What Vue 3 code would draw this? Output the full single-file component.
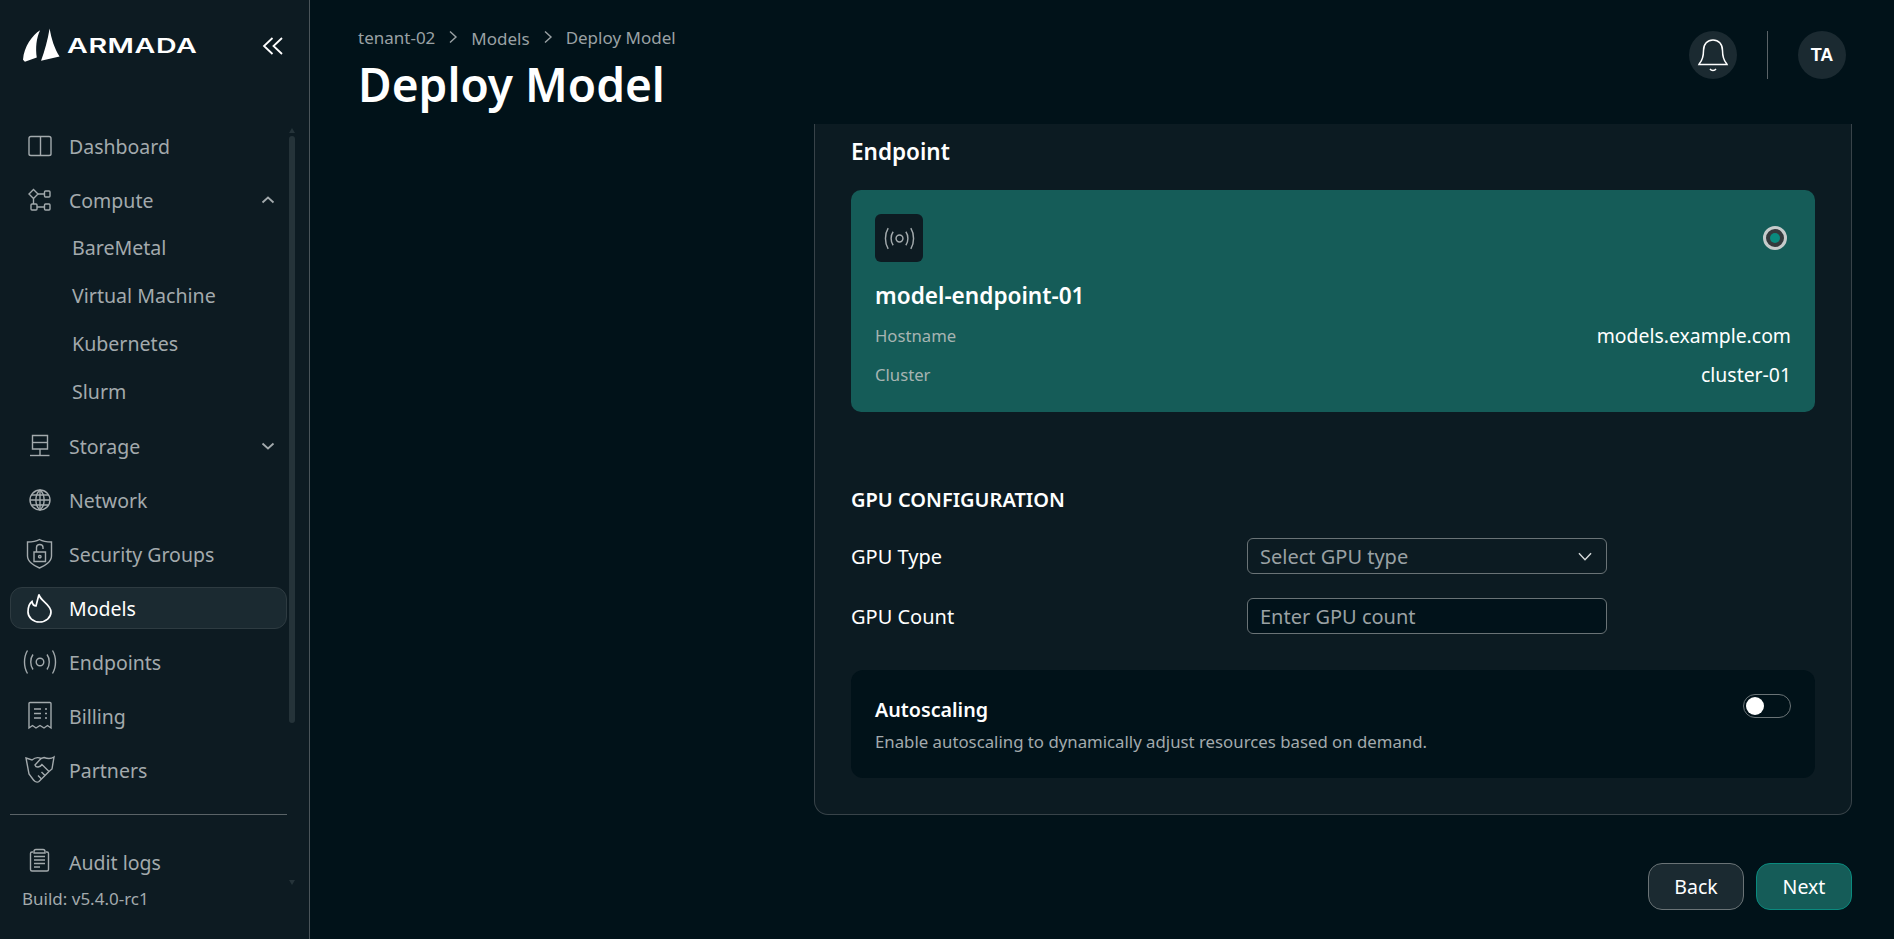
<template>
  <div class="layout">
    <aside class="sidebar">
      <div class="brand">
        <svg class="logo-mark" viewBox="0 0 40 36">
          <path d="M18 2C10 7 1 19 0 33L2 35L14.5 30.5C13 21 14 10 18 2Z" />
          <path d="M28 0C26 12 23 23 19 34L38.5 29.5C33 21 30 11 28 0Z" />
        </svg>
        <span class="logo-text">ARMADA</span>
        <svg class="collapse" viewBox="0 0 22 20">
          <path d="M10.5 2L2 10L10.5 18M20 2L11.5 10L20 18" />
        </svg>
      </div>

      <div class="side-body">
        <div class="side-col">
          <nav class="nav">
            <template v-for="item in navItems" :key="item.label">
              <div class="nav-item" :class="{ active: item.active }">
                <svg class="nav-icon" viewBox="0 0 32 32">
                  <path v-for="d in item.icon" :key="d" :d="d" />
                </svg>
                <span class="nav-label">{{ item.label }}</span>
                <svg v-if="item.chevron" class="nav-chev" viewBox="0 0 14 10">
                  <path :d="item.chevron === 'up' ? 'M1.5 7.5L7 2.5L12.5 7.5' : 'M1.5 2.5L7 7.5L12.5 2.5'" />
                </svg>
              </div>
              <div v-if="item.children" class="sub-list">
                <div v-for="child in item.children" :key="child" class="sub-item">{{ child }}</div>
              </div>
            </template>
          </nav>
          <div class="side-divider"></div>
          <div class="nav-item audit">
            <svg class="nav-icon" viewBox="0 0 32 32">
              <path v-for="d in auditIcon" :key="d" :d="d" />
            </svg>
            <span class="nav-label">Audit logs</span>
          </div>
          <div class="build">Build: v5.4.0-rc1</div>
        </div>
        <div class="scrollbar">
          <span class="arrow up"></span>
          <span class="thumb"></span>
          <span class="arrow down"></span>
        </div>
      </div>
    </aside>

    <main class="main">
      <header class="topbar">
        <div>
          <div class="crumbs">
            <span>tenant-02</span>
            <svg class="crumb-sep" viewBox="0 0 10 14"><path d="M2 1.5L8 7L2 12.5" /></svg>
            <span class="crumb-low">Models</span>
            <svg class="crumb-sep" viewBox="0 0 10 14"><path d="M2 1.5L8 7L2 12.5" /></svg>
            <span>Deploy Model</span>
          </div>
          <h1 class="title">Deploy Model</h1>
        </div>
        <div class="top-actions">
          <div class="round-btn">
            <svg class="bell" viewBox="0 0 48 48">
              <path d="M10.5 32.5C13.5 29 14.5 25 14.5 19.5C14.5 13 18.5 9 24 9C29.5 9 33.5 13 33.5 19.5C33.5 25 34.5 29 37.5 32.5L38 33.5H10L10.5 32.5Z" />
              <path d="M21 38C22.5 40 25.5 40 27 38" />
            </svg>
          </div>
          <span class="top-divider"></span>
          <div class="round-btn initials">TA</div>
        </div>
      </header>

      <section class="content">
        <div class="card">
          <h2 class="card-title">Endpoint</h2>
          <div class="endpoint">
            <div class="endpoint-head">
              <div class="endpoint-icon">
                <svg viewBox="0 0 32 32">
                  <path v-for="d in endpointIcon" :key="d" :d="d" />
                </svg>
              </div>
              <span class="radio"><span class="radio-dot"></span></span>
            </div>
            <div class="endpoint-name">model-endpoint-01</div>
            <div class="endpoint-row first">
              <span class="key">Hostname</span>
              <span class="val">models.example.com</span>
            </div>
            <div class="endpoint-row">
              <span class="key">Cluster</span>
              <span class="val">cluster-01</span>
            </div>
          </div>

          <h3 class="section-title">GPU CONFIGURATION</h3>
          <div class="form-row first">
            <label class="form-label">GPU Type</label>
            <div class="select">
              <span>Select GPU type</span>
              <svg viewBox="0 0 14 10"><path d="M1.5 2L7 8L12.5 2" /></svg>
            </div>
          </div>
          <div class="form-row">
            <label class="form-label">GPU Count</label>
            <input class="input" placeholder="Enter GPU count" />
          </div>

          <div class="autoscale">
            <div>
              <div class="auto-title">Autoscaling</div>
              <div class="auto-desc">Enable autoscaling to dynamically adjust resources based on demand.</div>
            </div>
            <span class="toggle"><span class="knob"></span></span>
          </div>
        </div>
      </section>

      <footer class="footer">
        <button class="btn back">Back</button>
        <button class="btn next">Next</button>
      </footer>
    </main>
  </div>
</template>

<script setup>
const endpointIcon = [
  'M16 12.2A3.8 3.8 0 1 1 16 19.8A3.8 3.8 0 1 1 16 12.2Z',
  'M9 8.5C6 12.5 6 19.5 9 23.5',
  'M23 8.5C26 12.5 26 19.5 23 23.5',
  'M3.5 4.5C-0.5 11 -0.5 21 3.5 27.5',
  'M28.5 4.5C32.5 11 32.5 21 28.5 27.5'
]

const auditIcon = [
  'M9 6H8C7 6 6.5 6.5 6.5 7.5V23.5C6.5 24.5 7 25 8 25H23C24 25 24.5 24.5 24.5 23.5V7.5C24.5 6.5 24 6 23 6H22',
  'M10 5.5C10 4 10.5 3.5 12 3.5H19C20.5 3.5 21 4 21 5.5V7H10V5.5Z',
  'M10 10.5H21M10 14H21M10 17.5H21M10 21H16'
]

const navItems = [
  {
    label: 'Dashboard',
    icon: ['M7 6.5H25C26 6.5 27 7.5 27 8.5V24C27 25 26 25.5 25 25.5H7C6 25.5 5 25 5 24V8.5C5 7.5 6 6.5 7 6.5Z', 'M16.5 6.5V25.5']
  },
  {
    label: 'Compute',
    chevron: 'up',
    icon: [
      'M9.5 5.5L14 10L9.5 14.5L5 10Z',
      'M14 10H20M9.5 14.5V20M13 23H20',
      'M21.5 7H25C25.5 7 26 7.5 26 8V12C26 12.5 25.5 13 25 13H21.5C21 13 20.5 12.5 20.5 12V8C20.5 7.5 21 7 21.5 7Z',
      'M8 20H12C12.5 20 13 20.5 13 21V25C13 25.5 12.5 26 12 26H8C7.5 26 7 25.5 7 25V21C7 20.5 7.5 20 8 20Z',
      'M21.5 20H25C25.5 20 26 20.5 26 21V25C26 25.5 25.5 26 25 26H21.5C21 26 20.5 25.5 20.5 25V21C20.5 20.5 21 20 21.5 20Z'
    ],
    children: ['BareMetal', 'Virtual Machine', 'Kubernetes', 'Slurm']
  },
  {
    label: 'Storage',
    chevron: 'down',
    icon: ['M8.5 5.5H23.5V19H8.5Z', 'M8.5 12.5H23.5', 'M16 19V25', 'M6 25.5H25.5']
  },
  {
    label: 'Network',
    icon: [
      'M16 6A10 10 0 1 1 16 26A10 10 0 1 1 16 6Z',
      'M16 6C10.5 11 10.5 21 16 26C21.5 21 21.5 11 16 6Z',
      'M16 6V26M6 16H26M7.5 11H24.5M7.5 21H24.5'
    ]
  },
  {
    label: 'Security Groups',
    icon: [
      'M15.5 1.5C19 3.5 23 4 27.5 4V18C27.5 23.5 21 28 15.5 30C10 28 3.5 23.5 3.5 18V4C8 4 12 3.5 15.5 1.5Z',
      'M10 14H21.5V23.5H10Z',
      'M12.5 14V9.5C12.5 5.5 19 5.5 19 9.5V11',
      'M15.8 17.5A1.2 1.2 0 1 1 15.8 19.9A1.2 1.2 0 1 1 15.8 17.5Z'
    ]
  },
  {
    label: 'Models',
    active: true,
    icon: ['M15 2.5C16 9 27 12 27 20A11.5 10 0 0 1 4 20C4 15 6 11 8 9.5C8.5 12 10 14 12 14C13 10 14 6 15 2.5Z']
  },
  { label: 'Endpoints', icon: endpointIcon },
  {
    label: 'Billing',
    icon: [
      'M5 28V3.5C5 3 5.5 2.5 6 2.5H26C26.5 2.5 27 3 27 3.5V28L23.5 25.5L20 28L16 25.5L12 28L8.5 25.5L5 28Z',
      'M10 9H17M10 13.5H17M10 18H17M21 9H23M21 13.5H23M21 18H23'
    ]
  },
  {
    label: 'Partners',
    icon: [
      'M2 4L8 6C11 3.5 14 3 17 4.5L20 3.5C24 5 27 5 30 3L28 15L25 17.5L15 27.5C13.5 28.5 11 28 9.5 26L5 20L2 4Z',
      'M17 4.5L11 11C12 14 16 13.5 18 10.5L25 17.5',
      'M21 21.5L17.5 18M17.5 25L14 21.5'
    ]
  }
]
</script>

<style scoped>
.layout {
  display: flex;
  height: 100vh;
  background: #011219;
  color: #fff;
  font-family: "Noto Sans", sans-serif;
  overflow: hidden;
}

/* sidebar */
.sidebar {
  width: 310px;
  flex-shrink: 0;
  background: #0d1b22;
  border-right: 1px solid #4a5459;
  box-sizing: border-box;
  display: flex;
  flex-direction: column;
}
.brand {
  height: 125px;
  box-sizing: border-box;
  padding: 28px 25px 0 23px;
  display: flex;
  align-items: flex-start;
}
.logo-mark {
  width: 38px;
  height: 35px;
  fill: #fff;
  overflow: visible;
}
.logo-text {
  font-family: "Inter", sans-serif;
  font-weight: 600;
  font-size: 20px;
  line-height: 24px;
  margin: 6px 0 0 6px;
  letter-spacing: 0.4px;
  transform: scaleX(1.43);
  transform-origin: left center;
}
.collapse {
  width: 22px;
  height: 20px;
  margin: 8px 0 0 auto;
  fill: none;
  stroke: #fff;
  stroke-width: 1.8;
}
.side-body {
  flex: 1;
  display: flex;
  min-height: 0;
}
.side-col {
  width: 277px;
  margin-left: 10px;
  display: flex;
  flex-direction: column;
}
.nav {
  display: flex;
  flex-direction: column;
  gap: 12px;
}
.nav-item {
  height: 42px;
  box-sizing: border-box;
  display: flex;
  align-items: center;
  gap: 13px;
  padding-left: 13px;
  padding-right: 11px;
  border: 1px solid transparent;
  border-radius: 12px;
  color: #a3aaad;
  font-size: 19.5px;
}
.nav-item.active {
  background: #1b2a31;
  border-color: #2e3b41;
  color: #fff;
}
.nav-icon {
  width: 32px;
  height: 32px;
  flex-shrink: 0;
  overflow: visible;
  fill: none;
  stroke: #a3aaad;
  stroke-width: 1.4;
}
.active .nav-icon {
  stroke: #fff;
  stroke-width: 1.7;
}
.nav-chev {
  width: 14px;
  height: 10px;
  margin-left: auto;
  fill: none;
  stroke: #a3aaad;
  stroke-width: 1.8;
}
.sub-list {
  margin: -9px 0 -3px;
  display: flex;
  flex-direction: column;
}
.sub-item {
  height: 48px;
  line-height: 48px;
  padding-left: 62px;
  color: #a3aaad;
  font-size: 19.6px;
}
.side-divider {
  height: 1px;
  background: #5a6367;
  margin-top: 23px;
  flex-shrink: 0;
}
.audit {
  margin-top: 26px;
  flex-shrink: 0;
}
.build {
  margin: 4px 0 0 12px;
  line-height: 24px;
  font-size: 17px;
  color: #a3aaad;
}
.scrollbar {
  width: 6px;
  margin-left: 2px;
  padding: 3px 0 54px;
  display: flex;
  flex-direction: column;
  align-items: center;
}
.thumb {
  width: 6px;
  height: 587px;
  margin-top: 3px;
  background: #253339;
  border-radius: 3px;
}
.arrow {
  width: 0;
  height: 0;
  border-left: 3px solid transparent;
  border-right: 3px solid transparent;
}
.arrow.up {
  border-bottom: 5px solid #253339;
}
.arrow.down {
  margin-top: auto;
  border-top: 5px solid #253339;
}

/* main */
.main {
  flex: 1;
  min-width: 0;
  display: flex;
  flex-direction: column;
}
.topbar {
  height: 124px;
  flex-shrink: 0;
  box-sizing: border-box;
  padding: 24px 48px 0 48px;
  display: flex;
  justify-content: space-between;
  align-items: flex-start;
}
.crumbs {
  display: flex;
  align-items: center;
  height: 26px;
  font-size: 17px;
  color: #9aa1a4;
}
.crumb-low {
  position: relative;
  top: 1px;
}
.crumb-sep {
  width: 10px;
  height: 14px;
  margin: 0 13px;
  fill: none;
  stroke: #9aa1a4;
  stroke-width: 1.4;
}
.title {
  margin: 4px 0 0;
  font-size: 46px;
  line-height: 60px;
  font-weight: 600;
}
.top-actions {
  display: flex;
  align-items: center;
  padding-top: 7px;
}
.round-btn {
  width: 48px;
  height: 48px;
  border-radius: 50%;
  background: #1b2a31;
  display: flex;
  align-items: center;
  justify-content: center;
}
.bell {
  width: 48px;
  height: 48px;
  fill: none;
  stroke: #fff;
  stroke-width: 1.5;
}
.top-divider {
  width: 1px;
  height: 48px;
  margin: 0 30px 0 30px;
  background: #5a6367;
}
.initials {
  font-family: "Liberation Sans", sans-serif;
  font-size: 18px;
  font-weight: 700;
}
.content {
  flex: 1;
  min-height: 0;
  padding: 0 42px 0 504px;
  display: flex;
}
.card {
  flex: 1;
  box-sizing: border-box;
  background: #0c1b22;
  border: 1px solid #384349;
  border-top: none;
  border-radius: 0 0 14px 14px;
  padding: 13px 36px 36px;
}
.card-title {
  margin: 0 0 23px;
  font-size: 22.5px;
  line-height: 30px;
  font-weight: 600;
}
.endpoint {
  background: #155c58;
  border-radius: 10px;
  padding: 24px 24px 18px;
}
.endpoint-head {
  display: flex;
  justify-content: space-between;
  align-items: center;
}
.endpoint-icon {
  width: 48px;
  height: 48px;
  border-radius: 6px;
  background: #0d1b22;
  display: flex;
  align-items: center;
  justify-content: center;
}
.endpoint-icon svg {
  width: 29px;
  height: 29px;
  overflow: visible;
  fill: none;
  stroke: #a3aaad;
  stroke-width: 1.6;
}
.radio {
  width: 24px;
  height: 24px;
  margin-right: 4px;
  box-sizing: border-box;
  border: 3px solid #c6cbcb;
  border-radius: 50%;
  background: #34393c;
  display: flex;
  align-items: center;
  justify-content: center;
}
.radio-dot {
  width: 10px;
  height: 10px;
  border-radius: 50%;
  background: #0a8a7e;
}
.endpoint-name {
  margin-top: 19px;
  font-size: 22.6px;
  line-height: 30px;
  font-weight: 600;
}
.endpoint-row {
  height: 39px;
  display: flex;
  justify-content: space-between;
  align-items: center;
}
.endpoint-row.first {
  margin-top: 5px;
}
.key {
  font-size: 16.7px;
  color: #a6b4b2;
}
.val {
  font-size: 19.4px;
  color: #fff;
}
.section-title {
  margin: 73px 0 0;
  font-size: 20px;
  line-height: 30px;
  font-weight: 600;
}
.form-row {
  display: flex;
  align-items: center;
  height: 36px;
  margin-top: 24px;
}
.form-row.first {
  margin-top: 23px;
}
.form-label {
  width: 396px;
  font-size: 20px;
}
.select,
.input {
  width: 360px;
  height: 36px;
  box-sizing: border-box;
  border: 1px solid #6a7376;
  border-radius: 6px;
  padding: 0 12px;
  font-family: inherit;
  font-size: 20px;
  color: #9aa1a4;
}
.select {
  display: flex;
  align-items: center;
  justify-content: space-between;
}
.select svg {
  width: 16px;
  height: 11px;
  fill: none;
  stroke: #d5d9da;
  stroke-width: 1.3;
  margin-right: 1px;
}
.input {
  background: #01121a;
  outline: none;
}
.input::placeholder {
  color: #9aa1a4;
  opacity: 1;
}
.autoscale {
  margin-top: 36px;
  height: 108px;
  box-sizing: border-box;
  background: #011219;
  border-radius: 12px;
  padding: 25px 24px 23px;
  display: flex;
  justify-content: space-between;
  align-items: flex-start;
}
.auto-title {
  font-size: 19.7px;
  line-height: 30px;
  font-weight: 600;
}
.auto-desc {
  margin-top: 5px;
  font-size: 16.8px;
  line-height: 24px;
  color: #a3aaad;
}
.toggle {
  width: 48px;
  height: 24px;
  margin-top: -1px;
  box-sizing: border-box;
  border: 1px solid #6a7376;
  border-radius: 12px;
  padding: 2px 2px;
  display: flex;
  align-items: center;
}
.knob {
  width: 18px;
  height: 18px;
  border-radius: 50%;
  background: #fff;
}
.footer {
  height: 124px;
  flex-shrink: 0;
  box-sizing: border-box;
  padding: 48px 42px 0 0;
  display: flex;
  justify-content: flex-end;
  align-items: flex-start;
  gap: 12px;
}
.btn {
  width: 96px;
  height: 47px;
  border-radius: 14px;
  font-family: inherit;
  font-size: 19.5px;
  color: #fff;
}
.back {
  background: #1b2a31;
  border: 1px solid #6a7376;
}
.next {
  background: #155c58;
  border: 1px solid #0a8a7e;
}
</style>

<style>
html,
body {
  margin: 0;
  background: #011219;
  overflow: hidden;
}
</style>
